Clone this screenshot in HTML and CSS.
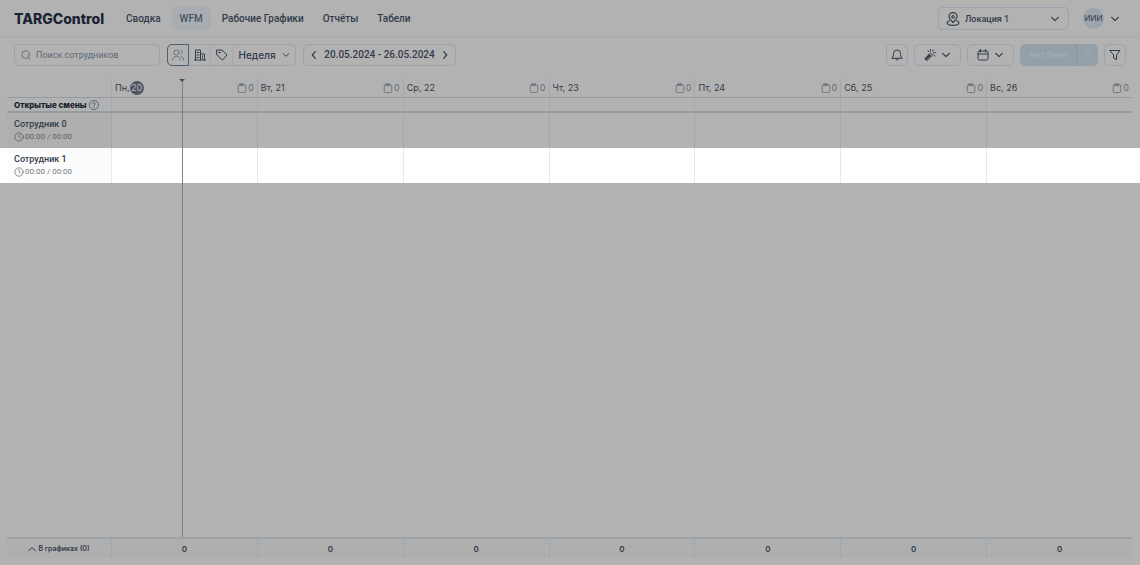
FILE: index.html
```html
<!DOCTYPE html>
<html lang="ru">
<head>
<meta charset="utf-8">
<title>TARGControl</title>
<link rel="stylesheet" href="styles.css">
</head>
<body>
<svg class="sprite" aria-hidden="true">
  <symbol id="down" viewBox="0 0 24 24"><path d="m4 8 8 8 8-8"/></symbol>
  <symbol id="left" viewBox="0 0 24 24"><path d="m15 4-7 8 7 8"/></symbol>
  <symbol id="right" viewBox="0 0 24 24"><path d="m9 4 7 8-7 8"/></symbol>
  <symbol id="up" viewBox="0 0 24 24"><path d="m2 17 10-9 10 9"/></symbol>
  <symbol id="search" viewBox="0 0 24 24"><circle cx="11" cy="11" r="9"/><path d="m17 17 5 5"/></symbol>
  <symbol id="users" viewBox="0 0 24 24"><circle cx="9" cy="7" r="5"/><path d="M1 22c0-10 16-10 16 0M17 2c5 1 5 8 1 9M19 15c3 1 4 4 4 7"/></symbol>
  <symbol id="building" viewBox="0 0 24 24"><path d="M3 22V2h10v20M13 10h8v12M1 22h22M6 7h4M6 12h4M6 17h4M17 14v1M17 18v1"/></symbol>
  <symbol id="tag" viewBox="0 0 24 24"><path d="M2 2h10l10 10-9 10L2 12z"/><circle cx="7" cy="7" r="1"/></symbol>
  <symbol id="pin" viewBox="0 0 24 24"><path d="M12 18c-4-4-7-7-7-11a7 6 0 0 1 14 0c0 4-3 7-7 11z"/><circle cx="12" cy="8" r="2"/><path d="M6 15c-8 3-4 8 6 8s14-5 6-8"/></symbol>
  <symbol id="bell" viewBox="0 0 24 24"><path d="M2 18c3-3 3-5 3-9a7 7 0 0 1 14 0c0 4 0 6 3 9zM9 19c0 4 6 4 6 0"/></symbol>
  <symbol id="wand" viewBox="0 0 24 24"><path d="m2 19 11-11 4 4L6 23zM10 11l4 4M13 1v3M8 4l2 1M19 2l-2 3M23 7l-4 1M20 13l2 1"/><path d="m4 20 7-7" stroke-width="4"/></symbol>
  <symbol id="calendar" viewBox="0 0 24 24"><rect x="2" y="4" width="20" height="18" rx="3"/><path d="M2 10h20M7 1v5M17 1v5"/></symbol>
  <symbol id="filter" viewBox="0 0 24 24"><path d="M2 3h20l-7 9v9l-6-3v-6z"/></symbol>
  <symbol id="clip" viewBox="0 0 24 24"><rect x="3" y="4" width="18" height="19" rx="3"/><path d="M8 2h8v4H8z"/></symbol>
  <symbol id="help" viewBox="0 0 24 24"><circle cx="12" cy="12" r="11"/><path d="M9 9c0-4 6-4 6 0 0 2-3 2-3 5M12 17v1"/></symbol>
  <symbol id="clock" viewBox="0 0 24 24"><circle cx="12" cy="12" r="10"/><path d="M12 6v6l4 3"/></symbol>
</svg>

<header class="topbar">
  <a class="logo" href="#">TARGControl</a>
  <nav class="nav">
    <a href="#">Сводка</a>
    <a class="current" href="#">WFM</a>
    <a href="#">Рабочие Графики</a>
    <a href="#">Отчёты</a>
    <a href="#">Табели</a>
  </nav>
  <button class="location box"><svg class="icon large"><use href="#pin"/></svg><span>Локация 1</span><svg class="icon small"><use href="#down"/></svg></button>
  <button class="account"><span class="avatar">ИИИ</span><svg class="icon small"><use href="#down"/></svg></button>
</header>

<div class="toolbar">
  <label class="search box"><svg class="icon small"><use href="#search"/></svg><input type="search" placeholder="Поиск сотрудников" aria-label="Поиск сотрудников"></label>
  <div class="group box">
    <button class="selected" aria-label="Сотрудники"><svg class="icon"><use href="#users"/></svg></button>
    <button aria-label="Подразделения"><svg class="icon"><use href="#building"/></svg></button>
    <button aria-label="Метки"><svg class="icon"><use href="#tag"/></svg></button>
    <button class="period">Неделя<svg class="icon tiny"><use href="#down"/></svg></button>
  </div>
  <div class="dates box">
    <button aria-label="Назад"><svg class="icon small"><use href="#left"/></svg></button>
    <span>20.05.2024 - 26.05.2024</span>
    <button aria-label="Вперёд"><svg class="icon small"><use href="#right"/></svg></button>
  </div>
  <div class="actions">
    <button class="square box" aria-label="Уведомления"><svg class="icon"><use href="#bell"/></svg></button>
    <button class="menu box" aria-label="Автозаполнение"><svg class="icon"><use href="#wand"/></svg><svg class="icon small"><use href="#down"/></svg></button>
    <button class="menu box" aria-label="Календарь"><svg class="icon"><use href="#calendar"/></svg><svg class="icon small"><use href="#down"/></svg></button>
    <div class="publish"><button disabled>Нет смен</button><button class="more" disabled aria-label="Ещё"><svg class="icon tiny"><use href="#down"/></svg></button></div>
    <button class="square box" aria-label="Фильтр"><svg class="icon"><use href="#filter"/></svg></button>
  </div>
</div>

<main class="schedule">
  <div class="now"></div>
  <table class="grid">
    <thead>
      <tr>
        <th></th>
        <th><div class="day"><span>Пн,<b class="today">20</b></span><span class="count"><svg class="icon small"><use href="#clip"/></svg>0</span></div></th>
        <th><div class="day"><span>Вт, 21</span><span class="count"><svg class="icon small"><use href="#clip"/></svg>0</span></div></th>
        <th><div class="day"><span>Ср, 22</span><span class="count"><svg class="icon small"><use href="#clip"/></svg>0</span></div></th>
        <th><div class="day"><span>Чт, 23</span><span class="count"><svg class="icon small"><use href="#clip"/></svg>0</span></div></th>
        <th><div class="day"><span>Пт, 24</span><span class="count"><svg class="icon small"><use href="#clip"/></svg>0</span></div></th>
        <th><div class="day"><span>Сб, 25</span><span class="count"><svg class="icon small"><use href="#clip"/></svg>0</span></div></th>
        <th><div class="day"><span>Вс, 26</span><span class="count"><svg class="icon small"><use href="#clip"/></svg>0</span></div></th>
      </tr>
    </thead>
    <tbody>
      <tr class="open"><th><div class="line">Открытые смены<svg class="icon small"><use href="#help"/></svg></div></th><td></td><td></td><td></td><td></td><td></td><td></td><td></td></tr>
      <tr class="person"><th><div class="name">Сотрудник 0</div><div class="hours"><svg class="icon small"><use href="#clock"/></svg>00:00 / 00:00</div></th><td></td><td></td><td></td><td></td><td></td><td></td><td></td></tr>
      <tr class="person active"><th><div class="name">Сотрудник 1</div><div class="hours"><svg class="icon small"><use href="#clock"/></svg>00:00 / 00:00</div></th><td></td><td></td><td></td><td></td><td></td><td></td><td></td></tr>
    </tbody>
  </table>
</main>

<footer class="totals">
  <table class="grid">
    <tr><th><button class="expand"><svg class="icon tiny"><use href="#up"/></svg>В графиках (0)</button></th><td>0</td><td>0</td><td>0</td><td>0</td><td>0</td><td>0</td><td>0</td></tr>
  </table>
</footer>
</body>
</html>
```
FILE: styles.css
```css
* { box-sizing: border-box; }

body {
  display: flex;
  flex-direction: column;
  min-height: 100vh;
  margin: 0;
  background: #b2b2b2;
  color: #323b4a;
  font: 10px/12px Inter, "Noto Sans", sans-serif;
}

a { color: inherit; text-decoration: none; }

button, input {
  padding: 0;
  border: 0;
  background: none;
  color: inherit;
  font: inherit;
}

.sprite { position: absolute; width: 0; height: 0; }

.icon {
  flex: none;
  width: 12px;
  height: 12px;
  fill: none;
  stroke: currentColor;
  stroke-width: 2;
  stroke-linecap: round;
  stroke-linejoin: round;
}
.icon.large { width: 14px; height: 14px; }
.icon.small { width: 10px; height: 10px; }
.icon.tiny { width: 8px; height: 8px; stroke-width: 3; }

.box {
  border: 1px solid #98a3ad;
  border-radius: 5px;
}

.topbar {
  display: flex;
  align-items: center;
  height: 38px;
  padding: 1px 20px 0 14px;
  border-bottom: 2px solid #adadad;
}

.logo {
  width: 104px;
  color: #1a2233;
  font: 800 14px/20px Inter, sans-serif;
}

.nav { display: flex; gap: 3px; font: 500 10px/12px Roboto, sans-serif; }
.nav a { padding: 6px 8px; border-radius: 5px; }
.nav .current { background: #a9adb1; color: #465362; }

.location {
  display: flex;
  align-items: center;
  gap: 5px;
  width: 131px;
  height: 23px;
  margin-left: auto;
  padding: 0 8px 0 7px;
  font: 500 9px/12px Roboto, sans-serif;
}
.location span { flex: 1; text-align: left; }
.location .icon:last-child, .account .icon, .menu .small, .dates .icon { stroke-width: 3; }

.account { display: flex; align-items: center; gap: 6px; margin-left: 14px; }
.avatar {
  width: 21px;
  height: 21px;
  border-radius: 50%;
  background: #9ba5ad;
  font-size: 8px;
  line-height: 21px;
  text-align: center;
}

.toolbar {
  display: flex;
  align-items: center;
  gap: 7px;
  padding: 6px 14px 13px;
}
.toolbar .box { height: 22px; }

.search {
  display: flex;
  align-items: center;
  gap: 5px;
  width: 146px;
  padding: 0 6px;
  color: #56606c;
}
.search input { flex: 1; min-width: 0; outline: 0; font-family: Roboto, sans-serif; font-size: 9px; }
.search input::placeholder { color: #606a76; opacity: 1; }

.group { display: flex; width: 129px; }
.group button {
  display: flex;
  align-items: center;
  justify-content: center;
  width: 22px;
  border-right: 1px solid #a3abb1;
}
.group .selected {
  margin: -1px 0 -1px -1px;
  border: 1px solid #505e6e;
  border-radius: 5px 0 0 5px;
  color: #647281;
}
.group .period { flex: 1; gap: 6px; border-right: 0; font: 500 10px/12px Inter, sans-serif; }

.dates {
  display: flex;
  align-items: center;
  justify-content: space-between;
  width: 153px;
  padding: 0 5px;
}
.dates span { font: 500 10px/12px Roboto, sans-serif; white-space: nowrap; }
.dates button { display: flex; }

.actions { display: flex; gap: 6px; margin-left: auto; }
.square, .menu { display: flex; align-items: center; justify-content: center; }
.square { width: 22px; }
.menu { gap: 5px; width: 47px; }

.publish {
  display: flex;
  width: 78px;
  height: 22px;
  border-radius: 5px;
  background: #959fa8;
  color: #a9b0b6;
  font-size: 8px;
}
.publish button { flex: 1; color: inherit; }
.publish .more { flex: none; width: 22px; border-left: 1px dotted #7d8994; }

.schedule { position: relative; flex: 1; padding: 0 8px 0 7px; }

.now {
  position: absolute;
  z-index: 1;
  top: 0;
  bottom: 0;
  left: 16%;
  width: 1px;
  background: #8c7c7c;
}
.now::before {
  content: "";
  position: absolute;
  top: 0;
  left: -3px;
  border: solid transparent;
  border-width: 3px 3px 0;
  border-top-color: #5d4b50;
}

.grid {
  width: 100%;
  table-layout: fixed;
  border-collapse: separate;
  border-spacing: 0;
}
.grid th, .grid td {
  padding: 0;
  border-left: 1px solid #a0a7ad;
  font-weight: 400;
}
.grid th:first-child { width: 104px; border-left: 0; text-align: left; }

.grid thead th { height: 19px; border-bottom: 1px solid #929ca5; }
.day { display: flex; align-items: center; justify-content: space-between; padding: 0 3px; font-size: 9px; }
.day > span { display: flex; align-items: center; }
.today {
  width: 14px;
  height: 14px;
  border-radius: 50%;
  background: #4e5865;
  color: #b2b2b2;
  font-weight: 400;
  line-height: 14px;
  text-align: center;
}
.count { gap: 1px; color: #626d79; }

.open th, .open td { height: 15px; border-bottom: 2px solid #929ca5; }
.grid .open th { color: #151c28; font-size: 8px; font-weight: 800; }
.line { display: flex; align-items: center; gap: 3px; padding-left: 7px; white-space: nowrap; }
.line .icon { color: #4e5865; }

.person th { height: 35px; padding: 0 7px; background: #afafaf; }
.person .name { font: 500 9px/12px Roboto, sans-serif; }
.hours { display: flex; align-items: center; gap: 1px; margin-top: 1px; color: #58616c; font-family: Roboto, sans-serif; font-size: 8px; }

.active th, .active td { height: 35px; background: #fff; }
.grid .active td { border-color: #e6e8ea; }
.grid .active th { background: #fcfcfc; box-shadow: -8px 0 #fff; }
.active td:last-child { box-shadow: 8px 0 #fff; }
.active .hours { color: #737b84; }

.totals { padding: 0 8px 7px 7px; }
.totals .grid { border-top: 2px solid #9ca4aa; background: #afafaf; }
.totals th, .totals td { height: 19px; text-align: center; }
.totals td { font-size: 8px; font-weight: 600; }
.expand { display: flex; align-items: center; justify-content: center; gap: 2px; width: 100%; font-size: 7px; font-weight: 600; }
```
